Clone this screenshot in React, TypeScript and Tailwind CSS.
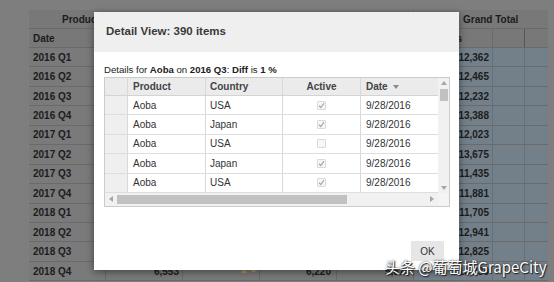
import React from 'react';

const dates = [
  '2016 Q1', '2016 Q2', '2016 Q3', '2016 Q4',
  '2017 Q1', '2017 Q2', '2017 Q3', '2017 Q4',
  '2018 Q1', '2018 Q2', '2018 Q3', '2018 Q4',
];

const totals = [
  '12,362', '12,465', '12,232', '13,388', '12,023', '13,675',
  '11,435', '11,881', '11,705', '12,941', '12,825', '13,230',
];

const details = [
  { product: 'Aoba', country: 'USA', active: true, date: '9/28/2016' },
  { product: 'Aoba', country: 'Japan', active: true, date: '9/28/2016' },
  { product: 'Aoba', country: 'USA', active: false, date: '9/28/2016' },
  { product: 'Aoba', country: 'Japan', active: true, date: '9/28/2016' },
  { product: 'Aoba', country: 'USA', active: true, date: '9/28/2016' },
];

function Arrow({ dir }: { dir: 'up' | 'down' | 'left' | 'right' }) {
  const pts = {
    up: '0,4 3,0 6,4',
    down: '0,0 6,0 3,4',
    left: '4,0 4,6 0,3',
    right: '0,0 4,3 0,6',
  }[dir];
  const vertical = dir === 'up' || dir === 'down';
  return (
    <svg width={vertical ? 6 : 4} height={vertical ? 4 : 6} viewBox={vertical ? '0 0 6 4' : '0 0 4 6'}>
      <polygon points={pts} fill="#a5a5a5" />
    </svg>
  );
}

function CheckBox({ checked }: { checked: boolean }) {
  return (
    <span className="w-[9px] h-[9px] border border-[#dadada] bg-[#f7f7f7] rounded-[1px] flex items-center justify-center">
      {checked && (
        <svg width="7" height="7" viewBox="0 0 7 7">
          <path d="M1 3.8 L2.8 5.5 L6 1.2" stroke="#a8a8a8" strokeWidth="1.2" fill="none" />
        </svg>
      )}
    </span>
  );
}

// pivot grid behind the dialog (already dimmed by the overlay)
function PivotBackground() {
  const cell = 'h-full border-r border-[#6a6a6a] flex items-center justify-end pr-[3px]';
  const blue = 'h-full border-r border-[#65717a] bg-[#73808a]';
  return (
    <div className="ml-[29px] mt-[10px] w-[519px] rounded-tl-[3px] bg-[#7a7a7a] text-[10px] font-bold text-[#1c1c1c]">
      <div className="flex h-[19px] border-b border-[#6a6a6a] bg-[#787878]">
        <div className="w-[385px] h-full border-r border-[#6a6a6a] flex items-center pl-[33px]">Product</div>
        <div className="w-[134px] h-full flex items-center pl-[49px]">Grand Total</div>
      </div>
      <div className="flex h-[19px] border-b border-[#6a6a6a] bg-[#787878]">
        <div className="w-[77px] h-full border-r border-[#6a6a6a] flex items-center pl-[4px]">Date</div>
        <div className="w-[77px] h-full border-r border-[#6a6a6a]" />
        <div className="w-[77px] h-full border-r border-[#6a6a6a]" />
        <div className="w-[77px] h-full border-r border-[#6a6a6a]" />
        <div className="w-[77px] h-full border-r border-[#6a6a6a]" />
        <div className="w-[79px] h-full border-r border-[#6a6a6a] flex items-center pl-[22px]">Sales</div>
        <div className="w-[32px] h-full border-r border-[#555]" />
        <div className="w-[23px] h-full" />
      </div>
      {dates.map((d, i) => (
        <div key={d} className="flex h-[19.45px] border-b border-[#6a6a6a]">
          <div className="w-[77px] h-full border-r border-[#6a6a6a] flex items-center pl-[4px]">{d}</div>
          <div className={`w-[77px] ${cell}`}>6,553</div>
          <div className={`w-[77px] ${cell} justify-center`}>
            <span className="text-[#a79a55] text-[9px]">▲ ●</span>
          </div>
          <div className={`w-[77px] ${cell} pr-[5px]`}>6,220</div>
          <div className={`w-[77px] ${cell}`}>5,870</div>
          <div className="w-[79px] h-full border-r border-[#65717a] bg-[#73808a] flex items-center justify-end pr-[3px]">
            {totals[i]}
          </div>
          <div className={`w-[32px] ${blue}`} />
          <div className="w-[23px] h-full bg-[#73808a]" />
        </div>
      ))}
    </div>
  );
}

function DetailGrid() {
  const col = 'h-full border-r border-[#d9d9d9] flex items-center';
  return (
    <div className="w-[346px] border border-[#cbcbcb] mt-[1px] text-[10px] text-[#333]">
      <div className="flex">
        <div className="w-[333px]">
          <div className="flex h-[18px] border-b border-[#d4d4d4] bg-[#ebebeb] font-bold text-[#444]">
            <div className={`w-[23px] ${col}`} />
            <div className={`w-[78px] ${col} pl-[5px]`}>Product</div>
            <div className={`w-[77px] ${col} pl-[4px]`}>Country</div>
            <div className={`w-[78px] ${col} justify-center`}>Active</div>
            <div className="w-[77px] h-full flex items-center pl-[5px] gap-[5px]">
              Date
              <svg width="6" height="4" viewBox="0 0 6 4">
                <polygon points="0,0 6,0 3,4" fill="#8a8a8a" />
              </svg>
            </div>
          </div>
          {details.map((r, i) => (
            <div key={i} className="flex h-[19.4px] border-b border-[#dedede] bg-white">
              <div className={`w-[23px] ${col} bg-[#efefef]`} />
              <div className={`w-[78px] ${col} pl-[5px]`}>{r.product}</div>
              <div className={`w-[77px] ${col} pl-[4px]`}>{r.country}</div>
              <div className={`w-[78px] ${col} justify-center`}>
                <CheckBox checked={r.active} />
              </div>
              <div className="w-[77px] h-full flex items-center pl-[5px]">{r.date}</div>
            </div>
          ))}
        </div>
        <div className="w-[11px] bg-[#f1f1f1] flex flex-col items-center pt-[3px] pb-[3px]">
          <Arrow dir="up" />
          <div className="w-[8px] h-[12px] bg-[#c1c1c1] mt-[4px]" />
          <div className="flex-1" />
          <Arrow dir="down" />
        </div>
      </div>
      <div className="flex h-[13px] bg-[#f1f1f1] items-center">
        <div className="w-[12px] flex justify-center">
          <Arrow dir="left" />
        </div>
        <div className="w-[230px] h-[9px] bg-[#c1c1c1]" />
        <div className="flex-1" />
        <div className="w-[12px] flex justify-center">
          <Arrow dir="right" />
        </div>
        <div className="w-[11px] h-full bg-[#f4f4f4]" />
      </div>
    </div>
  );
}

export default function App() {
  return (
    <div className="relative w-[554px] h-[282px] overflow-hidden bg-[#7e7e7e] font-['Liberation_Sans',Arial,sans-serif]">
      <PivotBackground />

      {/* Detail dialog */}
      <div className="absolute left-[94px] top-[12px] w-[365px] h-[258px] bg-white flex flex-col shadow-[0_2px_8px_rgba(0,0,0,0.45)]">
        <div className="h-[40px] bg-[#efefef] flex items-center pl-[12px] text-[11.5px] font-bold text-[#3a3a3a]">
          Detail View: 390 items
        </div>
        <div className="pl-[10px] pt-[12px]">
          <div className="h-[12px] leading-[12px] text-[9.6px] text-[#222]">
            Details for <b>Aoba</b> on <b>2016 Q3</b>: <b>Diff</b> is <b>1 %</b>
          </div>
          <DetailGrid />
        </div>
        <div className="mt-auto flex justify-end pr-[15px] pb-[9px]">
          <button className="w-[33px] h-[20px] bg-[#e6e6e6] text-[10px] text-[#333]">OK</button>
        </div>
      </div>

      {/* watermark */}
      <div className="absolute left-[385px] top-[257px] text-[15px] leading-[20px] text-white font-['Noto_Sans_CJK_SC','Liberation_Sans',sans-serif] [text-shadow:0_0_2px_#222,1px_1px_1px_#222] whitespace-nowrap">
        头条 @葡萄城GrapeCity
      </div>
    </div>
  );
}
